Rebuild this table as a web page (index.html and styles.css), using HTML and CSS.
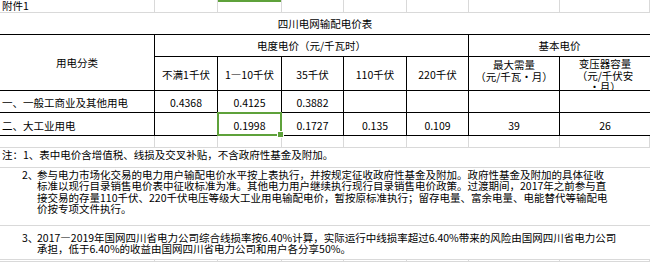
FILE: index.html
```html
<!DOCTYPE html>
<html lang="zh-CN">
<head>
    <meta charset="UTF-8">
    <title>四川电网输配电价表</title>
    <link rel="stylesheet" href="styles.css">
</head>
<body>
    <div class="sheet">
        <!-- row: 附件1 -->
        <div class="cell left caption">附件1</div>
        <div class="cell"></div>
        <div class="cell col-mark"></div>
        <div class="cell"></div>
        <div class="cell"></div>
        <div class="cell"></div>
        <div class="cell"></div>
        <div class="cell"></div>

        <!-- title -->
        <div class="cell dark full no-right">四川电网输配电价表</div>

        <!-- header -->
        <div class="cell dark span-rows">用电分类</div>
        <div class="cell dark span-5">电度电价（元/千瓦时）</div>
        <div class="cell dark span-2 no-right">基本电价</div>

        <div class="cell dark sub">不满1千伏</div>
        <div class="cell dark sub">1—10千伏</div>
        <div class="cell dark sub">35千伏</div>
        <div class="cell dark sub">110千伏</div>
        <div class="cell dark sub">220千伏</div>
        <div class="cell dark wrap">
            <div>最大需量</div>
            <div>（元/千瓦·月）</div>
        </div>
        <div class="cell dark wrap tight no-right">
            <div>变压器容量</div>
            <div>（元/千伏安</div>
            <div>·月）</div>
        </div>

        <!-- data rows -->
        <div class="cell dark left val">一、一般工商业及其他用电</div>
        <div class="cell dark val">0.4368</div>
        <div class="cell dark val">0.4125</div>
        <div class="cell dark val">0.3882</div>
        <div class="cell dark val"></div>
        <div class="cell dark val"></div>
        <div class="cell dark val"></div>
        <div class="cell dark val no-right"></div>

        <div class="cell dark left val">二、大工业用电</div>
        <div class="cell dark val"></div>
        <div class="cell dark val selected">0.1998</div>
        <div class="cell dark val">0.1727</div>
        <div class="cell dark val">0.135</div>
        <div class="cell dark val">0.109</div>
        <div class="cell dark val">39</div>
        <div class="cell dark val no-right">26</div>

        <!-- empty row -->
        <div class="cell"></div>
        <div class="cell"></div>
        <div class="cell"></div>
        <div class="cell"></div>
        <div class="cell"></div>
        <div class="cell"></div>
        <div class="cell"></div>
        <div class="cell"></div>

        <!-- notes -->
        <div class="cell full no-right note note-1">注：1、表中电价含增值税、线损及交叉补贴，不含政府性基金及附加。</div>
        <div class="cell full no-right note note-2">
            <span class="num">2、</span>
            <div class="lines">
                <div>参与电力市场化交易的电力用户输配电价水平按上表执行，并按规定征收政府性基金及附加。政府性基金及附加的具体征收</div>
                <div>标准以现行目录销售电价表中征收标准为准。其他电力用户继续执行现行目录销售电价政策。过渡期间，2017年之前参与直</div>
                <div>接交易的存量110千伏、220千伏电压等级大工业用电输配电价，暂按原标准执行；留存电量、富余电量、电能替代等输配电</div>
                <div>价按专项文件执行。</div>
            </div>
        </div>
        <div class="cell full no-right note note-3">
            <span class="num">3、</span>
            <div class="lines">
                <div>2017—2019年国网四川省电力公司综合线损率按6.40%计算，实际运行中线损率超过6.40%带来的风险由国网四川省电力公司</div>
                <div>承担，低于6.40%的收益由国网四川省电力公司和用户各分享50%。</div>
            </div>
        </div>

        <!-- last partial row -->
        <div class="cell"></div>
        <div class="cell"></div>
        <div class="cell"></div>
        <div class="cell"></div>
        <div class="cell"></div>
        <div class="cell"></div>
        <div class="cell"></div>
        <div class="cell"></div>
    </div>
</body>
</html>
```

FILE: styles.css
```css
body {
    margin: 0;
    background: #fff;
    color: #000;
    font-family: "Noto Sans CJK SC", "Noto Sans", sans-serif;
    font-size: 10.5px;
}

.sheet {
    display: grid;
    grid-template-columns: 155px 63px 64px 62px 63px 62px 91px 90px;
    grid-template-rows: 13px 22px 22px 34px 22px 23px 12px 20px 58px 34px 2px;
    width: 650px;
}

.cell {
    box-sizing: border-box;
    display: flex;
    align-items: center;
    justify-content: center;
    border-right: 1px solid #d9d9d9;
    border-bottom: 1px solid #d9d9d9;
    white-space: nowrap;
    line-height: 11.3px;
    overflow: hidden;
}

.cell.dark {
    border-color: #000;
}

.cell.no-right {
    border-right: none;
}

.left {
    justify-content: flex-start;
    padding-left: 2px;
}

.caption {
    overflow: visible;
    line-height: 12px;
}

.full {
    grid-column: 1 / -1;
}

.span-rows {
    grid-row: span 2;
}

.span-5 {
    grid-column: span 5;
}

.span-2 {
    grid-column: span 2;
}

.sub, .val {
    padding-top: 3px;
}

.wrap {
    flex-direction: column;
    justify-content: flex-start;
    padding-top: 2px;
    line-height: 11.5px;
}

.wrap.tight {
    padding-top: 1px;
}

.col-mark {
    box-shadow: inset 0 2px 0 #5ea13a;
}

.selected {
    position: relative;
    overflow: visible;
}

.selected::after {
    content: "";
    position: absolute;
    left: -1px;
    top: -1px;
    right: -1px;
    bottom: -1px;
    border: 2px solid #5ea13a;
}

.selected::before {
    content: "";
    position: absolute;
    right: -3px;
    bottom: -3px;
    width: 5px;
    height: 5px;
    background: #5ea13a;
    border: 1px solid #fff;
    z-index: 1;
}

.note {
    align-items: flex-start;
    justify-content: flex-start;
}

.note-1 {
    padding: 1px 0 0 2px;
}

.note-2 {
    padding: 1px 0 0 22px;
}

.note-3 {
    padding: 6px 0 0 22px;
}

.note .num {
    display: inline-block;
    width: 15px;
}
```
